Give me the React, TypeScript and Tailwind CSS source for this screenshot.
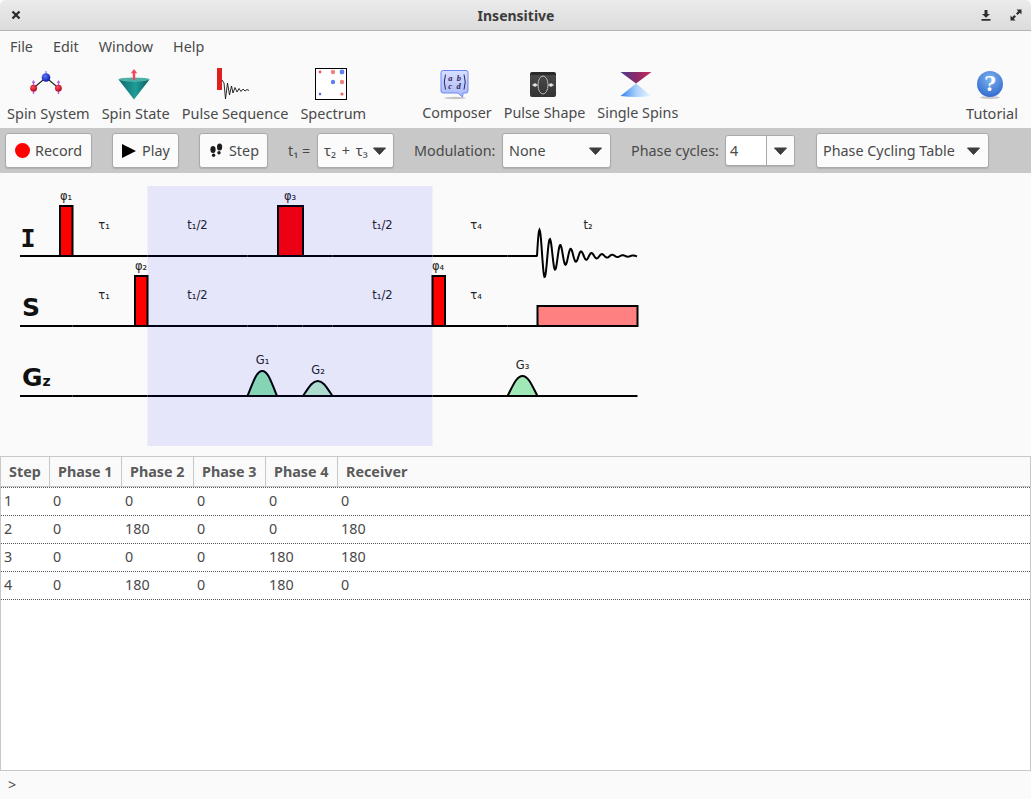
/**
 * Insensitive — main window, pulse sequence view with the phase cycling table.
 */
import type { ReactNode } from 'react'

const FONT = "font-['Noto_Sans','Open_Sans',sans-serif]"

function ChevronDown() {
  return (
    <svg width="13" height="8" viewBox="0 0 13 8" className="shrink-0">
      <path d="M0.5 1 H12.5 L6.5 7.5 Z" fill="#3d3d3d" stroke="#3d3d3d" strokeWidth="1" strokeLinejoin="round" />
    </svg>
  )
}

function SpinSystemIcon() {
  return (
    <svg width="32" height="32" viewBox="0 0 32 32">
      <defs>
        <radialGradient id="ballBlue" cx="0.4" cy="0.35" r="0.7">
          <stop offset="0" stopColor="#5a78ff" />
          <stop offset="1" stopColor="#0a14a8" />
        </radialGradient>
        <radialGradient id="ballRed" cx="0.4" cy="0.35" r="0.7">
          <stop offset="0" stopColor="#ff5060" />
          <stop offset="1" stopColor="#b00018" />
        </radialGradient>
      </defs>
      <path d="M3.5 20 L16 9.5 L28.5 20" fill="none" stroke="#202020" strokeWidth="1.1" />
      <path d="M3.5 13 V26" stroke="#b060e0" strokeWidth="1.4" />
      <path d="M1.8 15 L3.5 12 L5.2 15 Z" fill="#b060e0" />
      <path d="M28.5 13 V26" stroke="#b060e0" strokeWidth="1.4" />
      <path d="M26.8 15 L28.5 12 L30.2 15 Z" fill="#b060e0" />
      <path d="M16 3 V9" stroke="#9090e8" strokeWidth="1.4" />
      <circle cx="16" cy="9.5" r="4.3" fill="url(#ballBlue)" />
      <circle cx="3.6" cy="20.2" r="3.4" fill="url(#ballRed)" />
      <circle cx="28.4" cy="20.2" r="3.4" fill="url(#ballRed)" />
    </svg>
  )
}

function SpinStateIcon() {
  return (
    <svg width="32" height="32" viewBox="0 0 32 32">
      <defs>
        <linearGradient id="coneTeal" x1="0" x2="1" y1="0" y2="0">
          <stop offset="0" stopColor="#0b6a6c" />
          <stop offset="0.55" stopColor="#1f9c98" />
          <stop offset="1" stopColor="#0a5c60" />
        </linearGradient>
      </defs>
      <path d="M0.5 11.5 Q16 15 31.5 11.5 L16 31.5 Z" fill="url(#coneTeal)" />
      <ellipse cx="16" cy="11.5" rx="15.5" ry="2" fill="#4fb0a8" />
      <path d="M16 3 V12" stroke="#f04a5a" strokeWidth="2.4" />
      <path d="M12.8 5.2 L16 1 L19.2 5.2 Z" fill="#f04a5a" />
    </svg>
  )
}

function PulseSequenceIcon() {
  return (
    <svg width="32" height="32" viewBox="0 0 32 32">
      <rect x="0" y="0" width="5" height="22" fill="#e0201c" />
      <path
        d="M5 12 L7 15 L8.5 31 L10.5 15 L12.5 27 L14.5 18 L16 25 L18 19.5 L20 24 L22 20.5 L24 23.5 L26 21 L28 23 L30 21.5 L32 22.5"
        fill="none"
        stroke="#151515"
        strokeWidth="0.9"
      />
    </svg>
  )
}

function SpectrumIcon() {
  const spots = [
    { x: 5, y: 4, r: 1.4, c: '#f05050' },
    { x: 18, y: 4, r: 2.2, c: '#f08080' },
    { x: 27, y: 4, r: 2.4, c: '#6080f0' },
    { x: 18, y: 14, r: 2.2, c: '#6080f0' },
    { x: 27, y: 14, r: 2.2, c: '#f08080' },
    { x: 5, y: 26, r: 1.2, c: '#4060f0' },
    { x: 27, y: 26, r: 1.6, c: '#f06060' },
  ]
  return (
    <svg width="32" height="32" viewBox="0 0 32 32">
      <rect x="0.5" y="0.5" width="31" height="31" fill="#fff" stroke="#000" strokeWidth="1" />
      {spots.map((s) => (
        <circle key={`${s.x}-${s.y}`} cx={s.x} cy={s.y} r={s.r} fill={s.c} />
      ))}
    </svg>
  )
}

function ComposerIcon() {
  return (
    <svg width="32" height="32" viewBox="0 0 32 32">
      <defs>
        <linearGradient id="bubble" x1="0" x2="0" y1="0" y2="1">
          <stop offset="0" stopColor="#d8e0ff" />
          <stop offset="1" stopColor="#a8b8fa" />
        </linearGradient>
      </defs>
      <ellipse cx="16" cy="30" rx="11" ry="1.2" fill="#c4c4c4" />
      <path
        d="M4 2.5 H27 Q29 2.5 29 4.5 V23 Q29 25 27 25 H24 L23.5 29 L19 25 H4 Q2 25 2 23 V4.5 Q2 2.5 4 2.5 Z"
        fill="url(#bubble)"
        stroke="#6c88f0"
        strokeWidth="1"
      />
      <text x="15.5" y="12.5" textAnchor="middle" fontSize="8.5" fontStyle="italic" fontWeight="700" fontFamily="'Liberation Serif', serif" fill="#33245a" xmlSpace="preserve">
        a  b
      </text>
      <text x="15.5" y="20.5" textAnchor="middle" fontSize="8.5" fontStyle="italic" fontWeight="700" fontFamily="'Liberation Serif', serif" fill="#33245a" xmlSpace="preserve">
        c  d
      </text>
      <path d="M6.5 6.5 Q4 14 6.5 21.5 M25 6.5 Q27.5 14 25 21.5" fill="none" stroke="#33245a" strokeWidth="1" />
    </svg>
  )
}

function PulseShapeIcon() {
  return (
    <svg width="32" height="32" viewBox="0 0 32 32">
      <defs>
        <linearGradient id="shapeBox" x1="0" x2="0" y1="0" y2="1">
          <stop offset="0" stopColor="#2a2a2a" />
          <stop offset="0.12" stopColor="#2a2a2a" />
          <stop offset="0.14" stopColor="#484848" />
          <stop offset="1" stopColor="#333" />
        </linearGradient>
      </defs>
      <rect x="3" y="4" width="26" height="25" rx="2" fill="url(#shapeBox)" />
      <ellipse cx="16" cy="17" rx="5" ry="9" fill="none" stroke="#b8b8b8" strokeWidth="1" />
      <path d="M5 17 H11 M21 17 H27" stroke="#d8d8d8" strokeWidth="0.9" />
      <circle cx="8" cy="17" r="1.8" fill="#e8e8e8" />
      <circle cx="24" cy="17" r="1.8" fill="#e8e8e8" />
    </svg>
  )
}

function SingleSpinsIcon() {
  return (
    <svg width="32" height="32" viewBox="0 0 32 32">
      <defs>
        <linearGradient id="hourTop" x1="0" x2="1" y1="0" y2="0">
          <stop offset="0" stopColor="#4c3a90" />
          <stop offset="0.5" stopColor="#8a2a68" />
          <stop offset="1" stopColor="#c82858" />
        </linearGradient>
        <linearGradient id="hourBottom" x1="0" x2="1" y1="0" y2="0">
          <stop offset="0" stopColor="#2f80f0" />
          <stop offset="0.5" stopColor="#a8d0fa" />
          <stop offset="1" stopColor="#f0f6ff" />
        </linearGradient>
      </defs>
      <path d="M0.5 4 H31.5 L16 15.5 Z" fill="url(#hourTop)" />
      <path d="M16 15.5 L31.5 28 Q16 30 0.5 28 Z" fill="url(#hourBottom)" />
    </svg>
  )
}

function TutorialIcon() {
  return (
    <svg width="32" height="32" viewBox="0 0 32 32">
      <defs>
        <radialGradient id="helpBlue" cx="0.5" cy="0.3" r="0.8">
          <stop offset="0" stopColor="#7cb2ee" />
          <stop offset="1" stopColor="#2a62cc" />
        </radialGradient>
      </defs>
      <ellipse cx="16" cy="29.5" rx="10" ry="1.4" fill="#c8c8c8" />
      <circle cx="16" cy="16" r="13" fill="url(#helpBlue)" />
      <text x="16" y="23" textAnchor="middle" fontSize="20" fontWeight="700" fontFamily="'DejaVu Serif', serif" fill="#fff">
        ?
      </text>
    </svg>
  )
}

function ToolItem({ label, icon }: { label: string; icon: ReactNode }) {
  return (
    <div className="flex flex-col items-center px-[6px]">
      <div className="mr-[4px] h-[32px] -mb-px">{icon}</div>
      <span className="mt-[4px] leading-[20px] whitespace-nowrap">{label}</span>
    </div>
  )
}

function GtkButton({ children, className }: { children: ReactNode; className: string }) {
  return (
    <div
      className={`flex h-[35px] items-center rounded-[3px] border border-[#a9a9a9] bg-[#fbfbfb] shadow-[0_1px_1px_rgba(0,0,0,0.12)] ${className}`}
    >
      {children}
    </div>
  )
}

function bump(x0: number, x1: number, peak: number, base = 396) {
  const w = x1 - x0
  const m = (x0 + x1) / 2
  return `M${x0} ${base} C${x0 + w * 0.22} ${peak + (base - peak) * 0.35} ${m - w * 0.18} ${peak} ${m} ${peak} C${m + w * 0.18} ${peak} ${x1 - w * 0.22} ${peak + (base - peak) * 0.35} ${x1} ${base}`
}

function fidPath() {
  let d = 'M537 256'
  for (let x = 537; x <= 637; x += 0.5) {
    const t = x - 537
    const y = 256 - 29 * Math.exp(-t / 24) * Math.sin((2 * Math.PI * t) / 10.4)
    d += ` L${x} ${y.toFixed(2)}`
  }
  return d
}

const SEAMS = [20, 72.5, 147.5, 247.5, 277.5, 302.5, 332.5, 432.5, 507.5, 537.5]

function BaseLine({ y, end }: { y: number; end: number }) {
  return (
    <>
      {SEAMS.map((x, i) => (
        <line key={x} x1={x} x2={SEAMS[i + 1] ?? end} y1={y} y2={y} stroke="#000" strokeWidth="2" />
      ))}
    </>
  )
}

function Label({ x, y, children, size = 11.5 }: { x: number; y: number; children: string; size?: number }) {
  return (
    <text x={x} y={y} textAnchor="middle" fontSize={size} fontFamily="'DejaVu Sans', sans-serif" fill="#222">
      {children}
    </text>
  )
}

function Pulse({ x, y, w, h, fill = '#ff0000' }: { x: number; y: number; w: number; h: number; fill?: string }) {
  return <rect x={x} y={y} width={w} height={h} fill={fill} stroke="#000" strokeWidth="2" />
}

function SequenceDiagram() {
  return (
    <svg width="1031" height="283" viewBox="0 173 1031 283" className="block shrink-0">
      <Pulse x={60} y={206} w={12.5} h={50} />
      <Pulse x={278} y={206} w={25} h={50} />
      <Pulse x={135} y={276} w={12.5} h={50} />
      <Pulse x={432.5} y={276} w={12.5} h={50} />
      <Pulse x={537.5} y={306} w={100} h={20} fill="#ff8080" />

      <path d={`${bump(247.5, 277, 371)} Z`} fill="#91e7af" stroke="#000" strokeWidth="2" />
      <path d={`${bump(303, 332.5, 381)} Z`} fill="#bcefcb" stroke="#000" strokeWidth="2" />
      <path d={`${bump(507.5, 537.5, 376)} Z`} fill="#a0e8b8" stroke="#000" strokeWidth="2" />

      <BaseLine y={256} end={537.5} />
      <BaseLine y={326} end={537.5} />
      <BaseLine y={396} end={637.5} />
      <path d={fidPath()} fill="none" stroke="#000" strokeWidth="2" />

      <text x={20.5} y={246.5} fontSize="25" fontWeight="700" fontFamily="'DejaVu Sans Mono', monospace" fill="#111">I</text>
      <text x={22} y={316} fontSize="25" fontWeight="700" fontFamily="'DejaVu Sans', sans-serif" fill="#111">S</text>
      <text x={22} y={386} fontSize="25" fontWeight="700" fontFamily="'DejaVu Sans', sans-serif" fill="#111">
        G<tspan fontSize="14">z</tspan>
      </text>

      <Label x={66} y={200}>φ₁</Label>
      <Label x={290} y={200}>φ₃</Label>
      <Label x={141} y={270}>φ₂</Label>
      <Label x={438} y={270}>φ₄</Label>
      <Label x={104} y={229}>τ₁</Label>
      <Label x={197.5} y={229}>t₁/2</Label>
      <Label x={382.5} y={229}>t₁/2</Label>
      <Label x={476} y={229}>τ₄</Label>
      <Label x={588} y={229}>t₂</Label>
      <Label x={104} y={299}>τ₁</Label>
      <Label x={197.5} y={299}>t₁/2</Label>
      <Label x={382.5} y={299}>t₁/2</Label>
      <Label x={476} y={299}>τ₄</Label>
      <Label x={262.5} y={364}>G₁</Label>
      <Label x={318} y={374}>G₂</Label>
      <Label x={522.5} y={369}>G₃</Label>

      {/* t1 evolution period, laid over the sequence */}
      <rect x={147.5} y={186} width={285} height={260} fill="#0000ff" fillOpacity="0.08" />
    </svg>
  )
}

const HEADERS = ['Step', 'Phase 1', 'Phase 2', 'Phase 3', 'Phase 4', 'Receiver']
const ROWS = [
  ['1', '0', '0', '0', '0', '0'],
  ['2', '0', '180', '0', '0', '180'],
  ['3', '0', '0', '0', '180', '180'],
  ['4', '0', '180', '0', '180', '0'],
]

function PhaseTable() {
  return (
    <div className="min-h-0 flex-1 border border-[#c8c8c8] bg-white">
      <div className="grid h-[30px] grid-cols-[49px_72px_72px_72px_72px_1fr] border-b border-[#c4c4c4] bg-[#fafafa] font-bold text-[#5a5a5a]">
        {HEADERS.map((h, i) => (
          <div key={h} className={`flex items-center pl-[8px] ${i < 5 ? 'border-r border-[#c8c8c8]' : ''}`}>
            {h}
          </div>
        ))}
      </div>
      <div className="border-t border-dotted border-[#555]">
        {ROWS.map((row) => (
          <div
            key={row[0]}
            className="grid h-[28px] grid-cols-[49px_72px_72px_72px_72px_1fr] items-center border-b border-dotted border-[#555] pb-[1px]"
          >
            {row.map((v, i) => (
              <div key={i} className="pl-[3px]">
                {v}
              </div>
            ))}
          </div>
        ))}
      </div>
    </div>
  )
}

export default function App() {
  return (
    <div className={`flex h-screen w-[1031px] flex-col overflow-hidden bg-[#fafafa] text-[14.35px] text-[#4a4a4a] ${FONT}`}>
      {/* title bar */}
      <div className="grid h-[31px] shrink-0 grid-cols-[1fr_auto_1fr] items-center rounded-t-[6px] border-b border-[#b4b4b4] bg-gradient-to-b from-[#ebebeb] to-[#dcdcdc] pl-[10px] pr-[9px]">
        <svg width="10" height="10" viewBox="0 0 10 10" className="ml-[1px]">
          <path d="M1.5 1.5 L8.5 8.5 M8.5 1.5 L1.5 8.5" stroke="#2e2e2e" strokeWidth="2.4" />
        </svg>
        <span className="text-[14px] font-bold text-[#3c3c3c]">Insensitive</span>
        <div className="flex items-center justify-end gap-[19px]">
          <svg width="10" height="11" viewBox="0 0 10 11">
            <path d="M3.5 0 H6.5 V4 H9 L5 7.8 L1 4 H3.5 Z M0.5 9 H9.5 V10.8 H0.5 Z" fill="#2e2e2e" />
          </svg>
          <svg width="12" height="12" viewBox="0 0 12 12">
            <path d="M6.5 0.5 H11.5 V5.5 L9.8 3.8 L7.6 6 L6 4.4 L8.2 2.2 Z M0.5 6.5 L2.2 8.2 L4.4 6 L6 7.6 L3.8 9.8 L5.5 11.5 H0.5 Z" fill="#2e2e2e" />
          </svg>
        </div>
      </div>

      {/* menu bar */}
      <div className="flex h-[33px] shrink-0 items-center gap-[20px] pb-[2px] pl-[10px]">
        <span>File</span>
        <span>Edit</span>
        <span>Window</span>
        <span>Help</span>
      </div>

      {/* toolbar */}
      <div className="flex h-[64px] shrink-0 items-start pl-[1px] pr-[7px] pt-[4px] text-[14.5px]">
        <ToolItem label="Spin System" icon={<SpinSystemIcon />} />
        <ToolItem label="Spin State" icon={<SpinStateIcon />} />
        <ToolItem label="Pulse Sequence" icon={<PulseSequenceIcon />} />
        <ToolItem label="Spectrum" icon={<SpectrumIcon />} />
        <div className="w-[44px]" />
        <div className="flex text-[14.35px]">
          <ToolItem label="Composer" icon={<ComposerIcon />} />
          <ToolItem label="Pulse Shape" icon={<PulseShapeIcon />} />
          <ToolItem label="Single Spins" icon={<SingleSpinsIcon />} />
        </div>
        <div className="flex-1" />
        <ToolItem label="Tutorial" icon={<TutorialIcon />} />
      </div>

      {/* controls */}
      <div className="flex h-[45px] shrink-0 items-center bg-[#c8c8c8] pl-[5px]">
        <GtkButton className="w-[87px] gap-[5px] pl-[9px]">
          <span className="h-[15px] w-[15px] rounded-full bg-[#ff0000]" />
          <span>Record</span>
        </GtkButton>
        <GtkButton className="ml-[20px] w-[67px] gap-[6px] pl-[9px]">
          <svg width="14" height="14" viewBox="0 0 14 14">
            <path d="M0 0 L14 7 L0 14 Z" fill="#000" />
          </svg>
          <span>Play</span>
        </GtkButton>
        <GtkButton className="ml-[20px] w-[69px] gap-[6px] pl-[10px]">
          <svg width="13" height="15" viewBox="0 0 13 15">
            <ellipse cx="3" cy="6.5" rx="2.6" ry="3.6" fill="#1c1c1c" />
            <ellipse cx="3.6" cy="12.3" rx="1.7" ry="1.8" fill="#1c1c1c" />
            <ellipse cx="9.6" cy="4" rx="2.6" ry="3.6" fill="#1c1c1c" />
            <ellipse cx="9" cy="9.8" rx="1.7" ry="1.8" fill="#1c1c1c" />
          </svg>
          <span>Step</span>
        </GtkButton>
        <span className="ml-[20px] w-[29px] whitespace-nowrap">t₁ =</span>
        <GtkButton className="w-[77px] justify-between pl-[6px] pr-[7px]">
          <span className="whitespace-nowrap [word-spacing:2px]">τ₂ + τ₃</span>
          <ChevronDown />
        </GtkButton>
        <span className="ml-[20px] w-[88px] whitespace-nowrap">Modulation:</span>
        <GtkButton className="w-[109px] justify-between pl-[6px] pr-[8px]">
          <span>None</span>
          <ChevronDown />
        </GtkButton>
        <span className="ml-[20px] w-[94px] whitespace-nowrap">Phase cycles:</span>
        <div className="flex h-[31px] w-[70px] overflow-hidden rounded-[3px] border border-[#a9a9a9] bg-white shadow-[0_1px_1px_rgba(0,0,0,0.12)]">
          <span className="flex w-[41px] items-center border-r border-[#a9a9a9] pl-[4px]">4</span>
          <span className="flex flex-1 items-center justify-center bg-[#fbfbfb]">
            <ChevronDown />
          </span>
        </div>
        <GtkButton className="ml-[21px] w-[173px] justify-between pl-[6px] pr-[8px]">
          <span className="whitespace-nowrap">Phase Cycling Table</span>
          <ChevronDown />
        </GtkButton>
      </div>

      <SequenceDiagram />
      <PhaseTable />

      {/* command line */}
      <div className="flex h-[28px] shrink-0 items-center pl-[8px]">&gt;</div>
    </div>
  )
}
